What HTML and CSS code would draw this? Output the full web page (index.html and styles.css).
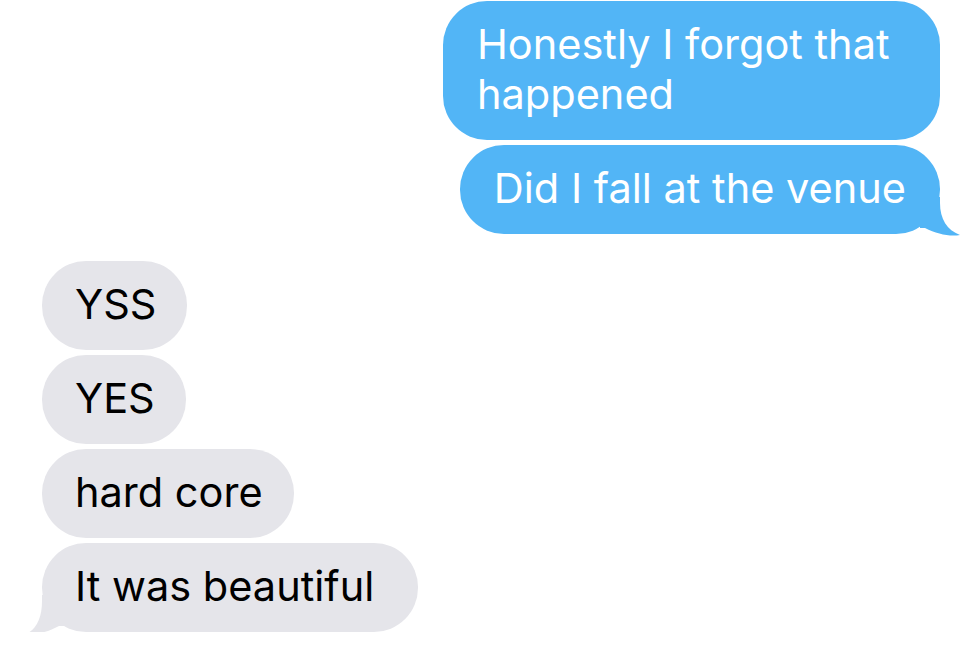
FILE: index.html
```html
<!DOCTYPE html>
<html lang="en">
<head>
<meta charset="UTF-8">
<meta name="viewport" content="width=device-width, initial-scale=1.0">
<title>Messages</title>
<link rel="stylesheet" href="styles.css">
</head>
<body>
  <!-- Conversation thread -->
  <div class="thread">
    <div class="group sent">
      <div class="bubble">Honestly I forgot that happened</div>
      <div class="bubble">Did I fall at the venue
        <svg class="tail" width="40" height="40" viewBox="0 0 40 40"><path d="M0 0 H20 V6 C20 22 27 33 40 38 C30 40 17 37 5 31 L0 31 Z"/></svg>
      </div>
    </div>

    <div class="group received">
      <div class="bubble">YSS</div>
      <div class="bubble">YES</div>
      <div class="bubble">hard core</div>
      <div class="bubble last">It was beautiful
        <svg class="tail" width="40" height="40" viewBox="0 0 40 40"><path d="M40 0 H16 V6 C16 22 11 33 2 38 C10 40 22 37 33 31 L40 31 Z"/></svg>
      </div>
    </div>
  </div>
</body>
</html>
```

FILE: styles.css
```css
/* Message thread styles */
body {
  background-color: #fff;
  font-family: Inter, "Liberation Sans", Arial, sans-serif;
  margin: 0;
  padding: 0;
}
.thread {
  padding: 1px 42px 0 42px;
  display: flex;
  flex-direction: column;
  gap: 27px;
}
.group {
  display: flex;
  flex-direction: column;
  gap: 5px;
}
.sent {
  align-items: flex-end;
}
.received {
  align-items: flex-start;
}
.bubble {
  position: relative;
  box-sizing: border-box;
  font-size: 41.5px;
  line-height: 50px;
  padding: 18px 31px 21px 33px;
  border-radius: 44px;
}
.sent .bubble {
  background-color: #52b5f6;
  color: #fff;
  max-width: 497px;
  margin-right: -2px;
  padding-left: 34px;
  padding-right: 34px;
}
.received .bubble {
  background-color: #e5e5ea;
  color: #000;
}
.received .last {
  padding-right: 44px;
}
.tail {
  position: absolute;
  bottom: -3px;
}
.sent .tail {
  right: -20px;
  fill: #52b5f6;
}
.received .tail {
  left: -16px;
  fill: #e5e5ea;
}
```
